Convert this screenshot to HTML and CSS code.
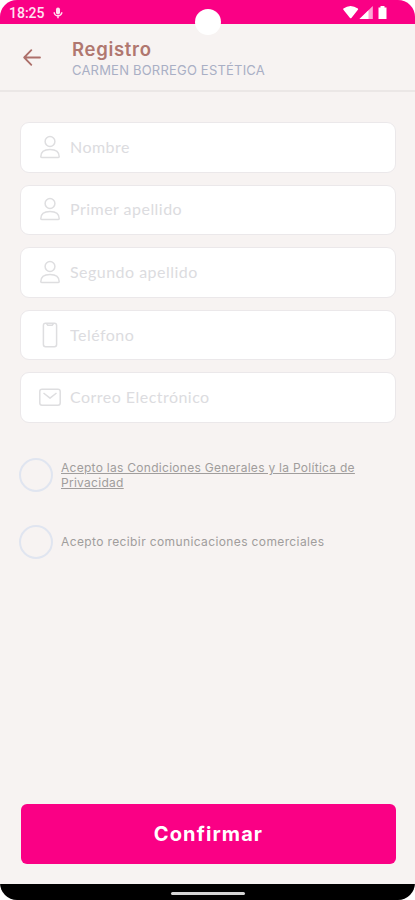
FILE: index.html
```
<!DOCTYPE html>
<html lang="es">
<head>
    <meta charset="UTF-8">
    <meta name="viewport" content="width=device-width, initial-scale=1.0">
    <title>Registro - Carmen Borrego Estética</title>
    <link rel="stylesheet" href="styles.css">
</head>
<body>
    <div class="phone">
        <div class="status-bar">
            <span class="time">18:25</span>
            <svg class="mic" width="10" height="12" viewBox="0 0 10 12">
                <rect x="3" y="0.5" width="4" height="7" rx="2" fill="currentColor"/>
                <path d="M1.2 5.2a3.8 3.6 0 0 0 7.6 0M5 8.8v2.4" fill="none" stroke="currentColor" stroke-width="1.5"/>
            </svg>
            <svg class="signals" width="46" height="15" viewBox="0 0 46 15">
                <path d="M0.4 3.6Q7.5-1.6 14.9 3.6Q15.4 4.2 14.9 4.8L8.4 13Q7.7 13.7 7 13L0.4 4.8Q0 4.2 0.4 3.6z" fill="#fff"/>
                <path d="M29.8 1v13H16.5z" fill="#fff" opacity="0.65"/>
                <path d="M25.5 5.3V14h-9z" fill="#fff"/>
                <path d="M35.5 2.5h2V1h4v1.5h2V14h-8z" fill="#fff"/>
            </svg>
            <span class="camera"></span>
        </div>

        <header class="header">
            <a href="#" class="back" aria-label="Volver">
                <svg width="18" height="17" viewBox="0 0 18 17" fill="none" stroke="currentColor" stroke-width="1.8" stroke-linecap="round" stroke-linejoin="round">
                    <path d="M17 8.5H1.2M8.3 1.2L1.2 8.5l7.1 7.3"/>
                </svg>
            </a>
            <div class="heading">
                <h1>Registro</h1>
                <p class="subtitle">CARMEN BORREGO ESTÉTICA</p>
            </div>
        </header>

        <form class="form">
            <label class="field">
                <svg width="24" height="26" viewBox="0 0 24 26"><circle cx="12" cy="7.5" r="4.9"/><path d="M2.8 22.8C2.8 18 6.5 15.6 12 15.6s9.2 2.4 9.2 7.2q0 .7-.8.7H3.6q-.8 0-.8-.7z"/></svg>
                <input type="text" placeholder="Nombre">
            </label>
            <label class="field">
                <svg width="24" height="26" viewBox="0 0 24 26"><circle cx="12" cy="7.5" r="4.9"/><path d="M2.8 22.8C2.8 18 6.5 15.6 12 15.6s9.2 2.4 9.2 7.2q0 .7-.8.7H3.6q-.8 0-.8-.7z"/></svg>
                <input type="text" placeholder="Primer apellido">
            </label>
            <label class="field">
                <svg width="24" height="26" viewBox="0 0 24 26"><circle cx="12" cy="7.5" r="4.9"/><path d="M2.8 22.8C2.8 18 6.5 15.6 12 15.6s9.2 2.4 9.2 7.2q0 .7-.8.7H3.6q-.8 0-.8-.7z"/></svg>
                <input type="text" placeholder="Segundo apellido">
            </label>
            <label class="field">
                <svg width="24" height="26" viewBox="0 0 24 26"><rect x="5.4" y="1.2" width="13.2" height="23.6" rx="2.2"/><path d="M8.5 1.5l1.3 1.7h4.4l1.3-1.7"/></svg>
                <input type="tel" placeholder="Teléfono">
            </label>
            <label class="field">
                <svg width="24" height="26" viewBox="0 0 24 26"><rect x="1.8" y="5.2" width="20.4" height="16" rx="2.2"/><path d="M5.5 9l6.5 5.2L18.5 9"/></svg>
                <input type="email" placeholder="Correo Electrónico">
            </label>

            <div class="check terms">
                <span class="circle"></span>
                <a href="#">Acepto las Condiciones Generales y la Política de<br>Privacidad</a>
            </div>
            <div class="check">
                <span class="circle"></span>
                <span class="commercial">Acepto recibir comunicaciones comerciales</span>
            </div>

            <button type="button" class="confirm">Confirmar</button>
        </form>

        <div class="nav-bar"><span class="home-line"></span></div>
    </div>
</body>
</html>
```

FILE: styles.css
```
* {
    margin: 0;
    padding: 0;
    box-sizing: border-box;
}

body {
    background: #fff;
    font-family: Lato, "Noto Sans", sans-serif;
}

.phone {
    width: 415px;
    height: 900px;
    display: flex;
    flex-direction: column;
    background: #f7f3f2;
    border-radius: 17px;
    overflow: hidden;
}

/* Status bar */
.status-bar {
    position: relative;
    height: 24px;
    padding: 1px 26px 0 9px;
    display: flex;
    align-items: center;
    background: #fa0085;
    color: #ffe3f1;
}

.time {
    font: 500 14px/20px Roboto, sans-serif;
}

.mic {
    margin-left: 8px;
}

.signals {
    margin-left: auto;
}

.camera {
    position: absolute;
    top: 9px;
    left: 195px;
    width: 26px;
    height: 26px;
    border-radius: 50%;
    background: #fff;
}

/* Header */
.header {
    height: 68px;
    padding: 0 23px;
    display: flex;
    align-items: center;
    gap: 31px;
    border-bottom: 2px solid #ebe7e6;
}

.back {
    display: flex;
    padding-top: 1px;
    color: #ad706b;
}

.heading {
    padding-top: 3px;
}

h1 {
    font: 600 18.5px/22px Inter, sans-serif;
    letter-spacing: 0.7px;
    color: #b0776f;
}

.subtitle {
    font: 400 13px/20px Inter, sans-serif;
    letter-spacing: 0.2px;
    color: #a9afc5;
}

/* Form */
.form {
    flex: 1;
    display: flex;
    flex-direction: column;
    padding: 30px 19px 20px 20px;
}

.field {
    height: 50.6px;
    margin-bottom: 12px;
    padding: 0 18px 1px 17px;
    display: flex;
    align-items: center;
    gap: 8px;
    background: #fff;
    border: 1.5px solid #ebe8ea;
    border-radius: 9px;
}

.field svg {
    flex: none;
    fill: none;
    stroke: #dedee0;
    stroke-width: 1.5;
    stroke-linejoin: round;
}

.field input {
    flex: 1;
    min-width: 0;
    border: none;
    outline: none;
    background: none;
    font: 400 16px/20px Lato, sans-serif;
    letter-spacing: 0.47px;
}

.field input::placeholder {
    color: #dcdce0;
}

.check {
    height: 34px;
    margin-left: -1px;
    display: flex;
    align-items: center;
    gap: 8px;
    font: 400 12px/15px Inter, sans-serif;
    letter-spacing: 0.28px;
    color: #a09d9c;
}

.check a {
    color: inherit;
}

.terms {
    margin: 23px 0 33px -1px;
}

.commercial {
    letter-spacing: 0.38px;
}

.circle {
    flex: none;
    width: 34px;
    height: 34px;
    border: 2px solid #e0e5f0;
    border-radius: 50%;
}

.confirm {
    height: 60px;
    margin-top: auto;
    margin-left: 1px;
    border: none;
    border-radius: 6px;
    background: #fa0085;
    color: #fff;
    font: 700 20px/24px Inter, sans-serif;
    letter-spacing: 1.1px;
}

/* Android navigation */
.nav-bar {
    height: 16px;
    display: flex;
    justify-content: center;
    padding-top: 8px;
    background: #000;
}

.home-line {
    width: 74px;
    height: 3px;
    border-radius: 2px;
    background: #d5d5d5;
}
```
